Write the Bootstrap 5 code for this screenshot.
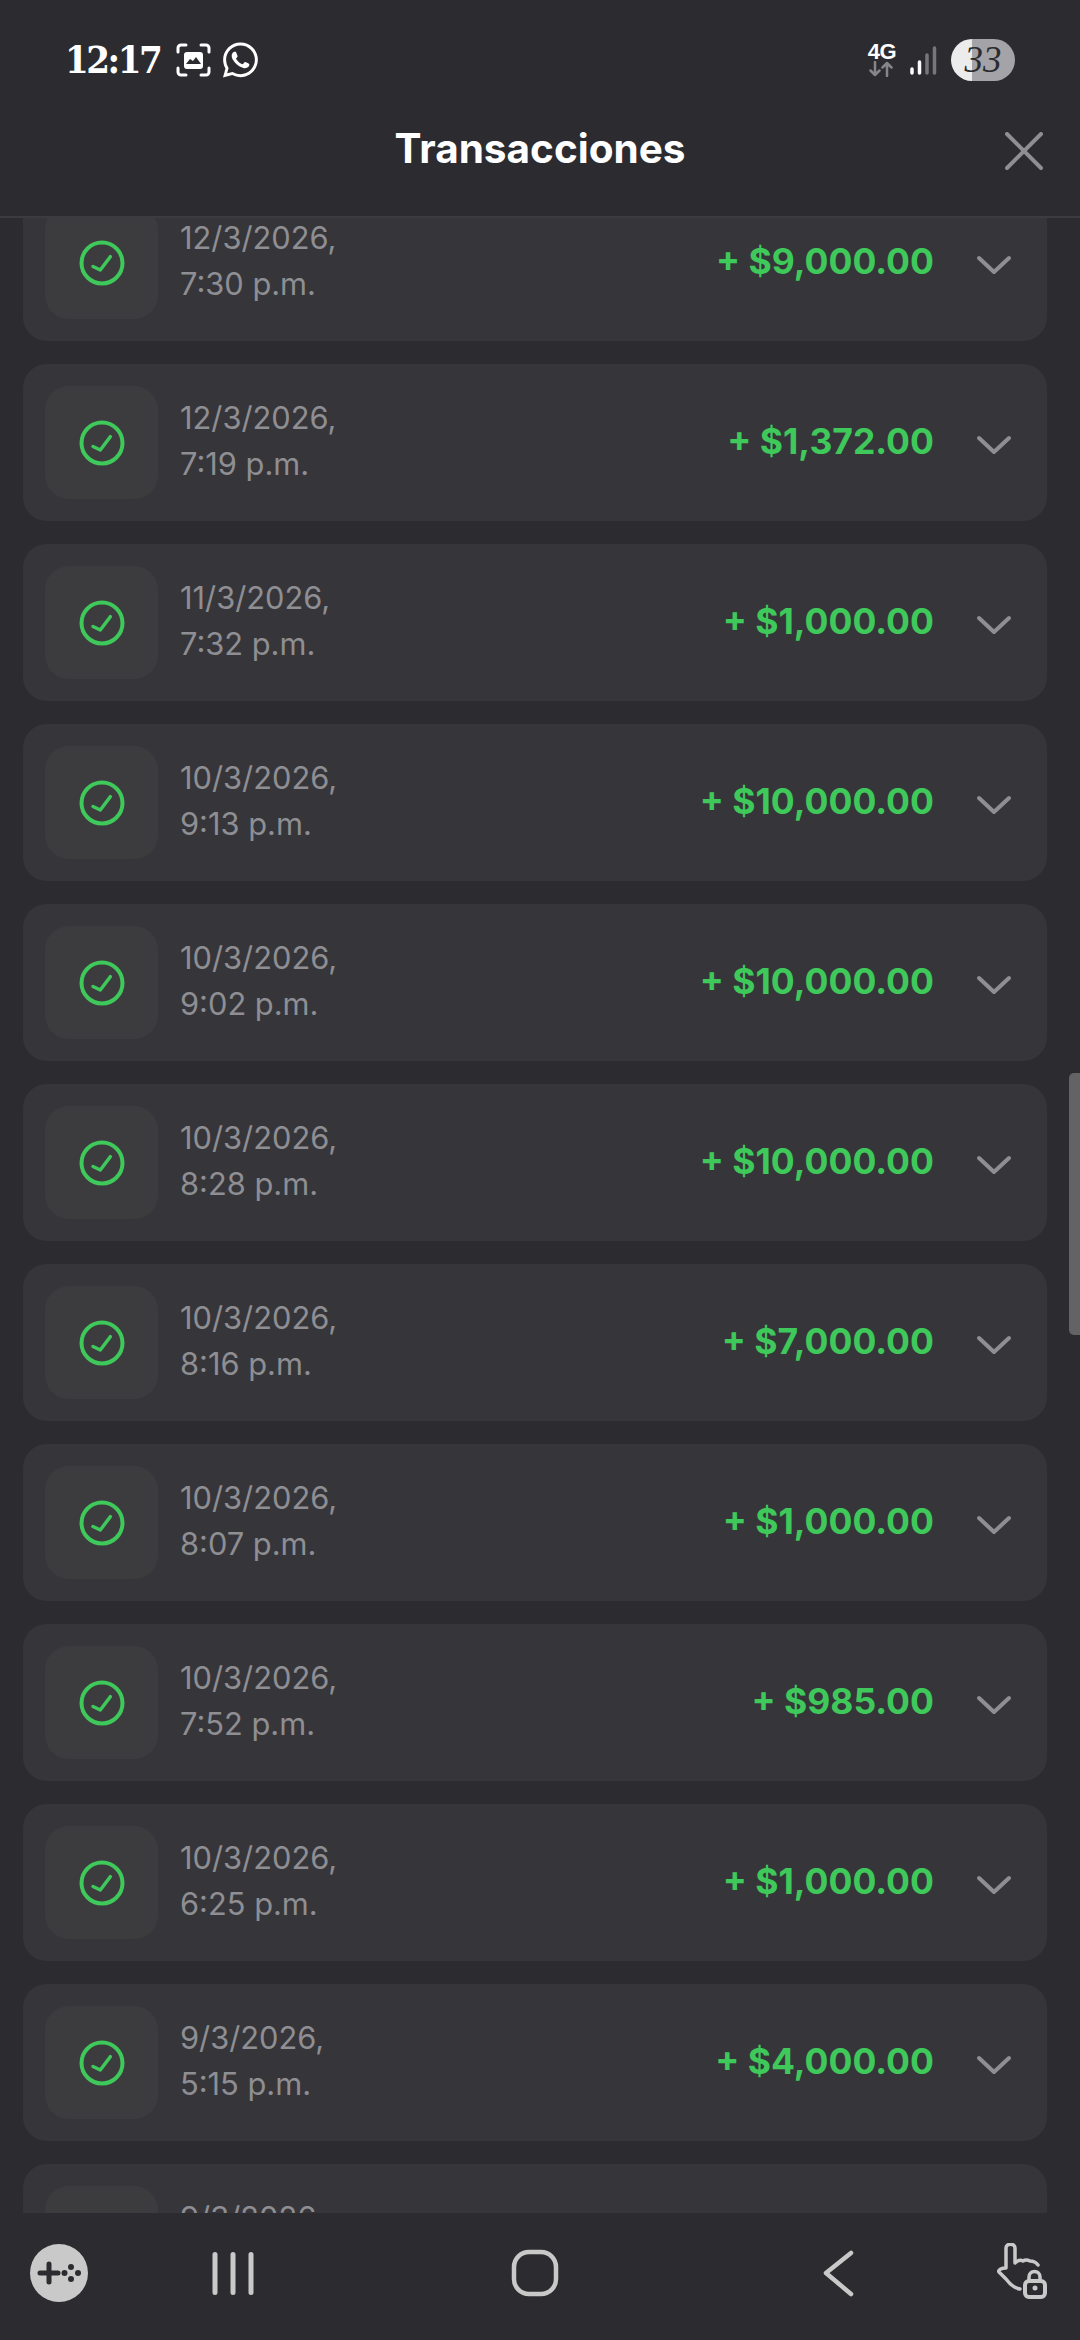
<!DOCTYPE html>
<html lang="es">
<head>
  <meta charset="UTF-8" />
  <meta name="viewport" content="width=device-width, initial-scale=1.0"/>
  <title>Transacciones</title>
  <link href="https://cdn.jsdelivr.net/npm/bootstrap@5.3.0/dist/css/bootstrap.min.css" rel="stylesheet" />
  <style>
    html, body { height: 2340px; overflow: hidden; }
    body { background: #2c2c30; font-family: Inter, "Liberation Sans", sans-serif; }
    .phone { height: 2340px; width: 1080px; position: relative; }
    .status-bar { height: 120px; flex: none; padding: 0 65px 0 65px; }
    .clock { width: 111px; font-family: "DejaVu Serif", serif; font-stretch: condensed; font-weight: 700; font-size: 38px; letter-spacing: -2.500px; color: #fff; line-height: 1; }
    .wa-icon { margin-left: 12px; }
    .net-label { font-family: "Liberation Sans", sans-serif; font-weight: 700; font-size: 22px; line-height: 18px; color: #fff; letter-spacing: -.5px; }
    .signal { margin-left: 13px; }
    .batt { width: 64px; height: 42px; border-radius: 21px; background: linear-gradient(90deg, #ececec 0 21px, #a4a4a8 21px); color: #2c2c30; font-family: "Liberation Serif", serif; font-style: italic; font-size: 37px; line-height: 42px; text-align: center; margin-left: 14px; }
    .top-bar { height: 98px; flex: none; border-bottom: 2px solid #3c3c40; position: relative; padding-bottom: 38px; }
    .top-bar h1 { font-size: 40.500px; font-weight: 700; color: #fff; margin: 0; line-height: 1; }
    .close-x { position: absolute; left: 1005px; top: 12px; }
    .tx-scroll { flex: 1 1 auto; min-height: 0; overflow: hidden; background: #2c2c30; padding: 0 33px 0 23px; }
    .tx-inner { margin-top: -34px; gap: 23px; }
    .tx-row { height: 157px; flex: none; background: #36363a; border-radius: 24px; padding: 22px; }
    .tx-icon { width: 113px; height: 113px; border-radius: 24px; background: #3c3c3e; flex: none; }
    .tx-date { color: #8e8e93; font-size: 30.800px; line-height: 46px; margin: -3px 0 0 22px; }
    .tx-amount { color: #3ec95a; font-size: 35.500px; font-weight: 700; margin: 0 0 2px auto; line-height: 1; }
    .tx-chevron { margin: 4px 14px 0 43px; flex: none; }
    .scroll-thumb { position: absolute; left: 1069px; top: 1073px; width: 11px; height: 262px; border-radius: 5px 0 0 5px; background: #636366; }
    .nav-bottom { height: 127px; flex: none; background: #2c2c30; position: relative; }
    .nav-bottom svg { position: absolute; top: 30px; }
  </style>
</head>
<body>
  <div class="phone d-flex flex-column">
    <div class="status-bar d-flex align-items-center">
      <span class="clock">12:17</span>
      <svg width="35" height="34" viewBox="0 0 35 34" fill="none" stroke="#fff" stroke-width="3" stroke-linecap="round">
        <path d="M2 9V5a3 3 0 0 1 3-3h5M25 2h5a3 3 0 0 1 3 3v4M33 25v4a3 3 0 0 1-3 3h-5M10 32H5a3 3 0 0 1-3-3v-4"/>
        <rect x="8" y="9" width="19" height="17" rx="3" fill="#fff" stroke="none"/>
        <path d="M10 21l4-5 3 2 3-4 5 7z" fill="#2c2c30" stroke="none"/>
      </svg>
      <svg class="wa-icon" width="35" height="36" viewBox="0 0 16 16" fill="#fff">
        <path d="M13.601 2.326A7.854 7.854 0 0 0 7.994 0C3.627 0 .068 3.558.064 7.926c0 1.399.366 2.76 1.057 3.965L0 16l4.204-1.102a7.933 7.933 0 0 0 3.79.965h.004c4.368 0 7.926-3.558 7.93-7.93A7.898 7.898 0 0 0 13.6 2.326zM7.994 14.521a6.573 6.573 0 0 1-3.356-.92l-.24-.144-2.494.654.666-2.433-.156-.251a6.56 6.56 0 0 1-1.007-3.505c0-3.626 2.957-6.584 6.591-6.584a6.56 6.56 0 0 1 4.66 1.931 6.557 6.557 0 0 1 1.928 4.66c-.004 3.639-2.961 6.592-6.592 6.592zm3.615-4.934c-.197-.099-1.17-.578-1.353-.646-.182-.065-.315-.099-.445.099-.133.197-.513.646-.627.775-.114.133-.232.148-.43.05-.197-.1-.836-.308-1.592-.985-.59-.525-.985-1.175-1.103-1.372-.114-.198-.011-.304.088-.403.087-.088.197-.232.296-.346.1-.114.133-.198.198-.33.065-.134.034-.248-.015-.347-.05-.099-.445-1.076-.612-1.47-.16-.389-.323-.335-.445-.34-.114-.007-.247-.007-.38-.007a.729.729 0 0 0-.529.247c-.182.198-.691.677-.691 1.654 0 .977.71 1.916.81 2.049.098.133 1.394 2.132 3.383 2.992.47.205.84.326 1.129.418.475.152.904.129 1.246.08.38-.058 1.171-.48 1.338-.943.164-.464.164-.86.114-.943-.049-.084-.182-.133-.38-.232z"/>
      </svg>
      <div class="ms-auto d-flex flex-column align-items-center">
        <span class="net-label">4G</span>
        <svg width="25" height="16" viewBox="0 0 25 16" fill="none" stroke="#86868a" stroke-width="2.500" stroke-linecap="round" stroke-linejoin="round">
          <path d="M6 1v13M1.500 9.500L6 14l4.500-4.500M18 15V2M13.500 6.500L18 2l4.500 4.500"/>
        </svg>
      </div>
      <svg class="signal" width="28" height="30" viewBox="0 0 28 30" stroke-width="3.500" stroke-linecap="round">
        <path d="M3 24v4M10.500 17v11" stroke="#fff"/>
        <path d="M18 10v18M25.500 3v25" stroke="#77777b"/>
      </svg>
      <span class="batt">33</span>
    </div>

    <div class="top-bar d-flex align-items-center justify-content-center">
      <h1>Transacciones</h1>
      <svg class="close-x" width="38" height="38" viewBox="0 0 38 38" stroke="#8e8e93" stroke-width="4" stroke-linecap="round">
        <path d="M2 2l34 34M36 2L2 36"/>
      </svg>
    </div>

    <div class="tx-scroll">
      <div class="tx-inner d-flex flex-column" id="txList"></div>
    </div>

    <div class="nav-bottom">
      <svg style="left:30px" width="58" height="60" viewBox="0 0 58 60">
        <circle cx="29" cy="30" r="29" fill="#c9c9c9"/>
        <path d="M10 30h18M19 21v18" stroke="#2c2c30" stroke-width="5" stroke-linecap="round"/>
        <circle cx="34.500" cy="30" r="3" fill="#2c2c30"/><circle cx="41" cy="24" r="3" fill="#2c2c30"/>
        <circle cx="48" cy="30" r="3" fill="#2c2c30"/><circle cx="41" cy="36" r="3" fill="#2c2c30"/>
      </svg>
      <svg style="left:210px" width="46" height="60" viewBox="0 0 46 60" stroke="#c9c9c9" stroke-width="5" stroke-linecap="round">
        <path d="M5 11.500v38M23 11.500v38M41 11.500v38"/>
      </svg>
      <svg style="left:510px" width="50" height="60" viewBox="0 0 50 60" fill="none" stroke="#c9c9c9" stroke-width="4.500">
        <rect x="4" y="9" width="42" height="42" rx="15"/>
      </svg>
      <svg style="left:820px" width="36" height="60" viewBox="0 0 36 60" fill="none" stroke="#c9c9c9" stroke-width="4.500" stroke-linecap="round" stroke-linejoin="round">
        <path d="M31 10L6 30l25 21"/>
      </svg>
      <svg style="left:997px" width="50" height="60" viewBox="0 0 50 60" fill="none" stroke="#c9c9c9" stroke-linecap="round" stroke-linejoin="round">
        <path d="M23 46C17 45 12 40 9 36L2 29c-1-2 2-4 7-4V5c0-5 9-5 9 0v15q4-4 8-2 3-2 7 0 5 0 8 4" stroke-width="3.500"/>
        <rect x="28" y="38" width="20" height="16" rx="4" stroke-width="4"/>
        <path d="M32 37v-3a5.500 5.500 0 0 1 11 0v3" stroke-width="3.500"/>
        <circle cx="38" cy="45" r="2.500" fill="#c9c9c9" stroke="none"/>
      </svg>
    </div>

    <div class="scroll-thumb"></div>
  </div>

  <script>
    const txs = [
      ["12/3/2026,", "7:30 p.m.", "+ $9,000.00"],
      ["12/3/2026,", "7:19 p.m.", "+ $1,372.00"],
      ["11/3/2026,", "7:32 p.m.", "+ $1,000.00"],
      ["10/3/2026,", "9:13 p.m.", "+ $10,000.00"],
      ["10/3/2026,", "9:02 p.m.", "+ $10,000.00"],
      ["10/3/2026,", "8:28 p.m.", "+ $10,000.00"],
      ["10/3/2026,", "8:16 p.m.", "+ $7,000.00"],
      ["10/3/2026,", "8:07 p.m.", "+ $1,000.00"],
      ["10/3/2026,", "7:52 p.m.", "+ $985.00"],
      ["10/3/2026,", "6:25 p.m.", "+ $1,000.00"],
      ["9/3/2026,", "5:15 p.m.", "+ $4,000.00"],
      ["9/3/2026,", "&nbsp;", ""] // only the top of this row shows above the nav bar
    ];
    const list = document.getElementById("txList");
    txs.forEach(t => {
      const row = document.createElement("div");
      row.className = "tx-row d-flex align-items-center";
      row.innerHTML = `
        <div class="tx-icon d-flex align-items-center justify-content-center">
          <svg width="46" height="46" viewBox="0 0 46 46" fill="none" stroke="#3ec95a" stroke-linecap="round" stroke-linejoin="round">
            <circle cx="23" cy="23" r="20.500" stroke-width="4"/>
            <path d="M14 26.500l7.300 3.500 10-13.300" stroke-width="3.500"/>
          </svg>
        </div>
        <div class="tx-date">${t[0]}<br>${t[1]}</div>
        <div class="tx-amount">${t[2]}</div>
        <svg class="tx-chevron" width="34" height="20" viewBox="0 0 34 20" fill="none" stroke="#8e8e93" stroke-width="4" stroke-linecap="round" stroke-linejoin="round">
          <path d="M2 3l15 14L32 3"/>
        </svg>`;
      list.appendChild(row);
    });
  </script>
  <script src="https://cdn.jsdelivr.net/npm/bootstrap@5.3.0/dist/js/bootstrap.bundle.min.js"></script>
</body>
</html>
